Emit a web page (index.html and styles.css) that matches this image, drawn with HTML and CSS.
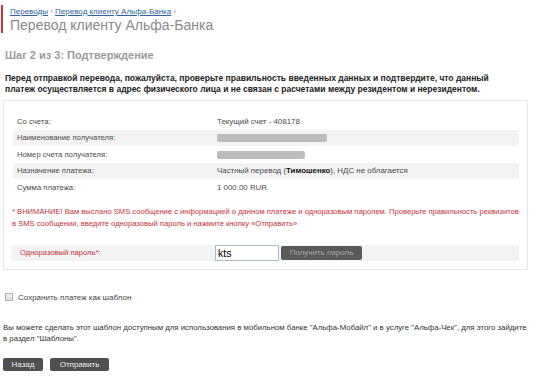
FILE: index.html
```html
<!DOCTYPE html>
<html lang="ru">
<head>
<meta charset="utf-8">
<title>Перевод клиенту Альфа-Банка</title>
<link rel="stylesheet" href="styles.css">
</head>
<body>
<div class="page">
  <div class="head">
    <div class="crumbs"><a href="#">Переводы</a> <span class="sep">›</span> <a href="#">Перевод клиенту Альфа-Банка</a> <span class="sep">›</span></div>
    <h1 class="title">Перевод клиенту Альфа-Банка</h1>
  </div>

  <h2 class="step">Шаг 2 из 3: Подтверждение</h2>

  <p class="lead">Перед отправкой перевода, пожалуйста, проверьте правильность введенных данных и подтвердите, что данный платеж осуществляется в адрес физического лица и не связан с расчетами между резидентом и нерезидентом.</p>

  <div class="box">
    <div class="rows">
      <div class="row"><span class="lbl">Со счета:</span><span class="val">Текущий счет - 408178</span></div>
      <div class="row alt"><span class="lbl">Наименование получателя:</span><span class="val"><span class="blur blur-name"></span></span></div>
      <div class="row"><span class="lbl">Номер счета получателя:</span><span class="val"><span class="blur blur-acc"></span></span></div>
      <div class="row alt"><span class="lbl">Назначение платежа:</span><span class="val">Частный перевод (<b>Тимошенко</b>), НДС не облагается</span></div>
      <div class="row"><span class="lbl">Сумма платежа:</span><span class="val">1 000.00 RUR</span></div>
    </div>

    <p class="warn">* ВНИМАНИЕ! Вам выслано SMS сообщение с информацией о данном платеже и одноразовым паролем. Проверьте правильность реквизитов в SMS сообщении, введите одноразовый пароль и нажмите кнопку «Отправить»</p>

    <div class="pwd">
      <span class="pwd-lbl">Одноразовый пароль*:</span>
      <input class="pwd-input" type="text" value="kts">
      <button class="btn btn-get" type="button">Получить пароль</button>
    </div>
  </div>

  <label class="save"><span class="cb"></span>Сохранить платеж как шаблон</label>

  <p class="note">Вы можете сделать этот шаблон доступным для использования в мобильном банке "Альфа-Мобайл" и в услуге "Альфа-Чек", для этого зайдите в раздел "Шаблоны".</p>

  <div class="actions">
    <button class="btn btn-back" type="button">Назад</button>
    <button class="btn btn-send" type="button">Отправить</button>
  </div>
</div>
</body>
</html>
```

FILE: styles.css
```css
* { box-sizing: border-box; }

body {
  margin: 0;
  background: #ffffff;
  font-family: "Liberation Sans", Arial, sans-serif;
  color: #333;
}

.page {
  padding: 5px 0 0 3px;
  width: 540px;
}

.head {
  border-left: 2px solid #c8323a;
  padding-left: 7px;
  height: 28px;
  margin-left: -2px;
}

.crumbs {
  font-size: 8px;
  line-height: 10px;
  padding-top: 2px;
  color: #888;
}

.crumbs a {
  color: #2f5f9e;
  text-decoration: underline;
}

.crumbs .sep {
  color: #999;
}

.title {
  margin: 0;
  font-size: 14px;
  line-height: 17px;
  font-weight: normal;
  color: #8a8a8a;
}

.step {
  margin: 16px 0 0 2px;
  font-size: 11px;
  line-height: 12px;
  font-weight: bold;
  color: #9a9a9a;
}

.lead {
  margin: 12px 0 0 2px;
  font-size: 8.5px;
  line-height: 11px;
  font-weight: bold;
  color: #222;
  width: 495px;
}

.box {
  margin-top: 5px;
  width: 525px;
  border: 1px solid #e6e6e6;
  padding: 12px 8px 8px 9px;
}

.row {
  display: flex;
  height: 16.5px;
  align-items: center;
  color: #4a4a4a;
  padding-left: 4px;
}

.row.alt {
  background: #f3f3f3;
}

.lbl {
  width: 200px;
  flex: none;
  font-size: 7.7px;
}

.val {
  font-size: 7.9px;
}

.val b {
  color: #111;
}

.blur {
  display: inline-block;
  height: 8px;
  background: #bcbcbc;
  border-radius: 2px;
  vertical-align: middle;
}

.blur-name { width: 110px; }
.blur-acc { width: 88px; }

.warn {
  margin: 10px 0 0 -1px;
  font-size: 7.6px;
  line-height: 12px;
  color: #c8303a;
}

.pwd {
  margin-top: 15px;
  margin-left: -2px;
  display: flex;
  align-items: center;
  height: 16px;
  background: #f3f3f3;
}

.pwd-lbl {
  width: 204px;
  flex: none;
  padding-left: 9px;
  font-size: 7.6px;
  color: #c8303a;
}

.pwd-input {
  width: 64px;
  height: 16px;
  margin: 0;
  padding: 0 2px;
  border: 1px solid #a9bcc8;
  font-family: "Liberation Sans", Arial, sans-serif;
  font-size: 10.5px;
  color: #000;
  background: #fff;
}

.btn {
  font-family: "Liberation Sans", Arial, sans-serif;
  font-size: 8px;
  border: none;
  border-radius: 2px;
  padding: 0;
  margin: 0;
  height: 14px;
  line-height: 14px;
  color: #eee;
  background: #505050;
}

.btn-get {
  margin-left: 2px;
  width: 81px;
  background: #5a5a5a;
  color: #a9a9a9;
}

.save {
  display: flex;
  align-items: center;
  margin-top: 23px;
  margin-left: 2px;
  font-size: 8px;
  color: #444;
}

.cb {
  width: 8px;
  height: 8px;
  border: 1px solid #b0b0b0;
  background: linear-gradient(#f0f0f0, #dcdcdc);
  margin-right: 5px;
}

.note {
  margin: 20px 0 0 0;
  font-size: 7.8px;
  line-height: 11px;
  color: #333;
  width: 524px;
}

.actions {
  display: flex;
  gap: 7px;
  margin-top: 14px;
}

.btn-back { width: 40px; height: 13px; line-height: 13px; }
.btn-send { width: 59px; height: 13px; line-height: 13px; }
```
